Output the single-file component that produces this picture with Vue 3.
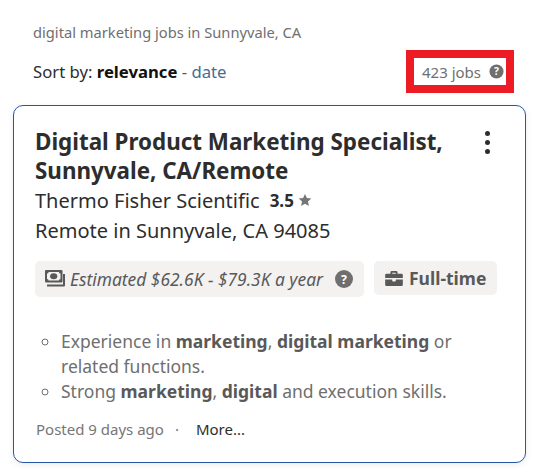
<script setup>
</script>

<template>
  <div class="page">
    <!-- search summary -->
    <p class="query">digital marketing jobs in Sunnyvale, CA</p>

    <div class="sort-row">
      <div class="sort">
        Sort by: <b>relevance</b> <span class="dash">-</span> <a class="date">date</a>
      </div>
      <div class="count">
        <span>423 jobs</span>
        <svg class="help small" viewBox="0 0 16 16">
          <circle cx="8" cy="8" r="7.5" fill="#6f6f6f" />
          <text x="8" y="12" text-anchor="middle" class="help-mark">?</text>
        </svg>
      </div>
    </div>

    <!-- job card -->
    <div class="card">
      <div class="head">
        <h2>Digital Product Marketing Specialist, Sunnyvale, CA/Remote</h2>
        <div class="dots"><i></i><i></i><i></i></div>
      </div>
      <div class="company">
        <span>Thermo Fisher Scientific</span>
        <b>3.5</b>
        <svg class="star" viewBox="0 0 24 24">
          <path d="M12 1.5l3.2 7.1 7.6.8-5.7 5.1 1.6 7.6L12 18.3l-6.7 3.8 1.6-7.6-5.7-5.1 7.6-.8z" fill="#767676" />
        </svg>
      </div>
      <div class="location">Remote in Sunnyvale, CA 94085</div>

      <div class="chips">
        <div class="chip salary">
          <svg class="money" viewBox="0 0 20 18">
            <path d="M1 0h15.500a1 1 0 0 1 1 1v10.500a1 1 0 0 1-1 1H1a1 1 0 0 1-1-1V1a1 1 0 0 1 1-1z" fill="#595959" />
            <path d="M2 3.600a1.600 1.600 0 0 0 1.600-1.600h10.300a1.600 1.600 0 0 0 1.600 1.600v5.300a1.600 1.600 0 0 0-1.600 1.600H3.600A1.600 1.600 0 0 0 2 8.900z" fill="#f3f2f1" />
            <ellipse cx="8.700" cy="6.200" rx="3.600" ry="3" fill="#595959" />
            <path d="M2 14.400h16V4h2v11.500a1 1 0 0 1-1 1H2z" fill="#595959" />
          </svg>
          <em>Estimated $62.6K - $79.3K a year</em>
          <svg class="help" viewBox="0 0 16 16">
            <circle cx="8" cy="8" r="8" fill="#6f6f6f" />
            <text x="8" y="12" text-anchor="middle" class="help-mark">?</text>
          </svg>
        </div>
        <div class="chip type">
          <svg class="case" viewBox="0 0 20 17">
            <path d="M6 3V1.500A1.500 1.500 0 0 1 7.500 0h5A1.500 1.500 0 0 1 14 1.500V3h4.500A1.500 1.500 0 0 1 20 4.500V8H0V4.500A1.500 1.500 0 0 1 1.500 3zm2-1v1h4V2z" fill="#595959" />
            <path d="M0 9.500h8V11a.8.8 0 0 0 .8.8h2.400A.8.8 0 0 0 12 11V9.500h8v6A1.500 1.500 0 0 1 18.500 17h-17A1.500 1.500 0 0 1 0 15.500z" fill="#595959" />
          </svg>
          <b>Full-time</b>
        </div>
      </div>

      <ul class="snippet">
        <li>Experience in <b>marketing</b>, <b>digital marketing</b> or<br />related functions.</li>
        <li>Strong <b>marketing</b>, <b>digital</b> and execution skills.</li>
      </ul>

      <div class="foot">
        <span class="posted">Posted 9 days ago</span>
        <span class="sep">·</span>
        <a class="more">More...</a>
      </div>
    </div>
  </div>
</template>

<style>
body {
  margin: 0;
  background: #fff;
}
</style>

<style scoped>
.page {
  width: 539px;
  height: 474px;
  box-sizing: border-box;
  padding: 23px 13px 0;
  font-family: 'Noto Sans', 'Open Sans', sans-serif;
  overflow: hidden;
}

.query {
  margin: 0 0 0 20px;
  font-size: 14.700px;
  line-height: 19px;
  color: #6f6f6f;
}

.sort-row {
  display: flex;
  justify-content: space-between;
  align-items: center;
  height: 43px;
  margin-top: 8px;
  margin-left: 20px;
  margin-right: 12px;
}

.sort {
  font-size: 16.700px;
  color: #2d2d2d;
}

.sort b {
  color: #111;
}

.dash {
  color: #595959;
}

.date {
  color: #4a6a94;
}

.count {
  display: flex;
  align-items: center;
  gap: 8px;
  box-sizing: border-box;
  width: 108px;
  height: 43px;
  padding-left: 8px;
  border: 8px solid #ed1c24;
  font-size: 15px;
  color: #6f6f6f;
}

.help {
  width: 18px;
  height: 18px;
  flex: none;
}

.help.small {
  width: 15px;
  height: 15px;
}

.help-mark {
  font-family: 'Noto Sans', sans-serif;
  font-size: 11px;
  font-weight: 700;
  fill: #fff;
}

.card {
  box-sizing: border-box;
  height: 358px;
  margin-top: 12px;
  padding: 21px 21px 0;
  border: 1px solid #2557a7;
  border-radius: 10px;
  box-shadow: 0 2px 6px rgba(0, 0, 0, 0.08);
  color: #2d2d2d;
}

.head {
  display: flex;
  justify-content: space-between;
}

h2 {
  width: 440px;
  margin: 0;
  font-size: 22.400px;
  line-height: 29px;
  font-weight: 700;
}

.dots {
  display: flex;
  flex-direction: column;
  gap: 4px;
  margin: 4px 14px 0 0;
}

.dots i {
  width: 5px;
  height: 5px;
  border-radius: 50%;
  background: #2d2d2d;
}

.company {
  display: flex;
  align-items: center;
  height: 30px;
  font-size: 20px;
}

.company b {
  margin-left: 10px;
  font-size: 17px;
}

.star {
  width: 14px;
  height: 14px;
  margin-left: 4px;
}

.location {
  margin-top: 1px;
  font-size: 20px;
  line-height: 30px;
}

.chips {
  display: flex;
  align-items: flex-start;
  gap: 10px;
  margin-top: 15px;
}

.chip {
  display: flex;
  align-items: center;
  background: #f3f2f1;
  border-radius: 5px;
  color: #595959;
}

.salary {
  width: 329px;
  height: 36px;
  box-sizing: border-box;
  padding-left: 10px;
  font-size: 17.400px;
}

.salary em {
  margin-left: 5px;
}

.salary .help {
  margin-left: 12px;
}

.money {
  width: 20px;
  height: 18px;
  flex: none;
}

.type {
  height: 34px;
  padding: 0 11px;
  font-size: 17.500px;
}

.case {
  width: 18px;
  height: 15px;
  margin-right: 6px;
}

.snippet {
  margin: 32px 0 0;
  padding: 0 0 0 26px;
  font-size: 17.500px;
  line-height: 25px;
  color: #6f6f6f;
  list-style: circle;
}

.snippet b {
  color: #595959;
}

.foot {
  display: flex;
  align-items: center;
  margin-top: 16px;
  margin-left: 1px;
  font-size: 15px;
  line-height: 19px;
}

.posted {
  color: #767676;
}

.sep {
  margin: 0 17px 0 11px;
  color: #767676;
}

.more {
  color: #2d2d2d;
}
</style>
